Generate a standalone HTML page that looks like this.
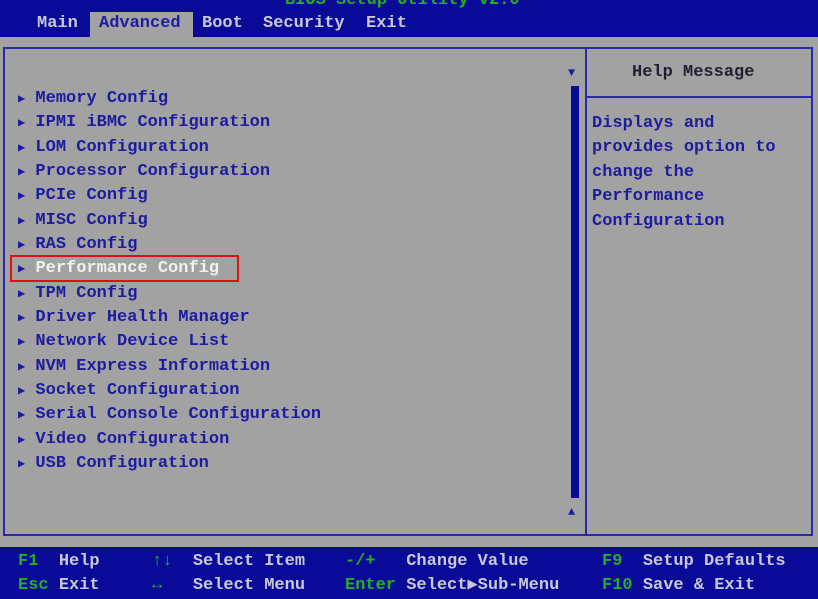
<!DOCTYPE html>
<html><head><style>
body{margin:0;width:818px;height:599px;background:#a2a2a2;position:relative;overflow:hidden;font-family:"Liberation Mono",monospace;font-size:17px;font-weight:bold;}
.a{position:absolute;white-space:pre;line-height:20px;}
.b{color:#1c1ca0}
.w{color:#f0f0f0}
.g{color:#22b022}
.l{color:#c8c8d8}
</style></head><body>
<div style="position:absolute;left:0;top:0;width:818px;height:37px;background:#0a0a98"></div>
<div class="a g" style="left:285px;top:-9px">BIOS Setup Utility v2.0</div>
<div style="position:absolute;left:90px;top:12px;width:103px;height:25px;background:#a2a2a2"></div>
<div class="a l" style="left:37px;top:14px">Main</div>
<div class="a b" style="left:99px;top:14px">Advanced</div>
<div class="a l" style="left:202px;top:14px">Boot</div>
<div class="a l" style="left:263px;top:14px">Security</div>
<div class="a l" style="left:366px;top:14px">Exit</div>
<div style="position:absolute;left:3px;top:47px;width:806px;height:485px;border:2px solid #2a2aa8"></div>
<div style="position:absolute;left:585px;top:47px;width:2px;height:489px;background:#2a2aa8"></div>
<div style="position:absolute;left:587px;top:96px;width:224px;height:2px;background:#2a2aa8"></div>
<div style="position:absolute;left:571px;top:86px;width:8px;height:412px;background:#0a0a98"></div>
<div class="a b" style="left:568px;top:63px;font-size:12px">▼</div>
<div class="a b" style="left:568px;top:502px;font-size:12px">▲</div>
<div class="a" style="left:632px;top:63px;color:#202030">Help Message</div>
<div class="a b" style="left:592px;top:112px;line-height:24.4px">Displays and
provides option to
change the
Performance
Configuration</div>
<div class="a b" style="left:18px;top:87px;line-height:24.35px"><span style="font-size:12px">▶</span> Memory Config
<span style="font-size:12px">▶</span> IPMI iBMC Configuration
<span style="font-size:12px">▶</span> LOM Configuration
<span style="font-size:12px">▶</span> Processor Configuration
<span style="font-size:12px">▶</span> PCIe Config
<span style="font-size:12px">▶</span> MISC Config
<span style="font-size:12px">▶</span> RAS Config
<span style="font-size:12px">▶</span> <span class="w">Performance Config</span>
<span style="font-size:12px">▶</span> TPM Config
<span style="font-size:12px">▶</span> Driver Health Manager
<span style="font-size:12px">▶</span> Network Device List
<span style="font-size:12px">▶</span> NVM Express Information
<span style="font-size:12px">▶</span> Socket Configuration
<span style="font-size:12px">▶</span> Serial Console Configuration
<span style="font-size:12px">▶</span> Video Configuration
<span style="font-size:12px">▶</span> USB Configuration</div>
<div style="position:absolute;left:10px;top:255px;width:225px;height:23px;border:2px solid #e01010"></div>
<div style="position:absolute;left:0;top:547px;width:818px;height:52px;background:#0a0a98"></div>
<div class="a" style="left:18px;top:550px;line-height:24px"><span class="g">F1</span>  <span class="l">Help</span></div>
<div class="a" style="left:18px;top:574px;line-height:24px"><span class="g">Esc</span> <span class="l">Exit</span></div>
<div class="a" style="left:152px;top:550px;line-height:24px"><span class="g">↑↓</span>  <span class="l">Select Item</span></div>
<div class="a" style="left:152px;top:574px;line-height:24px"><span class="g">↔</span>   <span class="l">Select Menu</span></div>
<div class="a" style="left:345px;top:550px;line-height:24px"><span class="g">-/+</span>   <span class="l">Change Value</span></div>
<div class="a" style="left:345px;top:574px;line-height:24px"><span class="g">Enter</span> <span class="l">Select▶Sub-Menu</span></div>
<div class="a" style="left:602px;top:550px;line-height:24px"><span class="g">F9</span>  <span class="l">Setup Defaults</span></div>
<div class="a" style="left:602px;top:574px;line-height:24px"><span class="g">F10</span> <span class="l">Save &amp; Exit</span></div>
</body></html>
